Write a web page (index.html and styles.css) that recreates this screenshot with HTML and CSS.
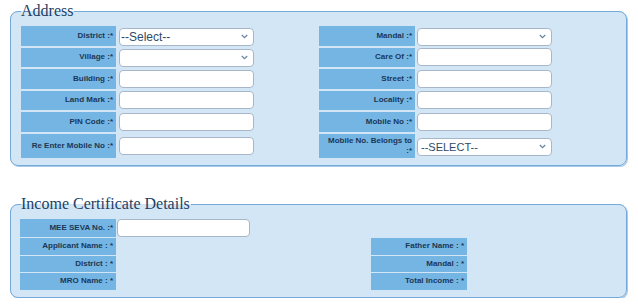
FILE: index.html
```html
<!DOCTYPE html>
<html>
<head>
<meta charset="utf-8">
<link rel="stylesheet" href="styles.css">
</head>
<body>
<fieldset class="box box-address">
  <legend class="legend">Address</legend>
  <div class="grid-address">
    <div class="lbl">District :*</div>
    <div class="cell"><div class="sel"><select class="ctl ctl-select"><option>--Select--</option></select><svg class="chev" width="7" height="5" viewBox="0 0 7 5"><path d="M0.8 1 L3.5 3.6 L6.2 1" fill="none" stroke="#6b87a3" stroke-width="1.3"/></svg></div></div>
    <div class="lbl">Mandal :*</div>
    <div class="cell cell-r"><div class="sel"><select class="ctl ctl-select"><option></option></select><svg class="chev" width="7" height="5" viewBox="0 0 7 5"><path d="M0.8 1 L3.5 3.6 L6.2 1" fill="none" stroke="#6b87a3" stroke-width="1.3"/></svg></div></div>

    <div class="lbl">Village :*</div>
    <div class="cell"><div class="sel"><select class="ctl ctl-select"><option></option></select><svg class="chev" width="7" height="5" viewBox="0 0 7 5"><path d="M0.8 1 L3.5 3.6 L6.2 1" fill="none" stroke="#6b87a3" stroke-width="1.3"/></svg></div></div>
    <div class="lbl">Care Of :*</div>
    <div class="cell cell-r"><input class="ctl" type="text"></div>

    <div class="lbl">Building :*</div>
    <div class="cell"><input class="ctl" type="text"></div>
    <div class="lbl">Street :*</div>
    <div class="cell cell-r"><input class="ctl" type="text"></div>

    <div class="lbl">Land Mark :*</div>
    <div class="cell"><input class="ctl" type="text"></div>
    <div class="lbl">Locality :*</div>
    <div class="cell cell-r"><input class="ctl" type="text"></div>

    <div class="lbl">PIN Code :*</div>
    <div class="cell"><input class="ctl" type="text"></div>
    <div class="lbl">Mobile No :*</div>
    <div class="cell cell-r"><input class="ctl" type="text"></div>

    <div class="lbl lbl-tall">Re Enter Mobile No :*</div>
    <div class="cell"><input class="ctl" type="text"></div>
    <div class="lbl lbl-tall">Mobile No. Belongs to :*</div>
    <div class="cell cell-r"><div class="sel"><select class="ctl ctl-select ctl-upper"><option>--SELECT--</option></select><svg class="chev" width="7" height="5" viewBox="0 0 7 5"><path d="M0.8 1 L3.5 3.6 L6.2 1" fill="none" stroke="#6b87a3" stroke-width="1.3"/></svg></div></div>
  </div>
</fieldset>

<fieldset class="box box-income">
  <legend class="legend">Income Certificate Details</legend>
  <div class="grid-income">
    <div class="lbl">MEE SEVA No. :*</div>
    <div class="cell-i"><input class="ctl ctl-mee" type="text"></div>
    <div></div>
    <div></div>

    <div class="lbl">Applicant Name : *</div>
    <div></div>
    <div class="lbl">Father Name : *</div>
    <div></div>

    <div class="lbl">District : *</div>
    <div></div>
    <div class="lbl">Mandal : *</div>
    <div></div>

    <div class="lbl">MRO Name : *</div>
    <div></div>
    <div class="lbl">Total Income : *</div>
    <div></div>
  </div>
</fieldset>
</body>
</html>
```
FILE: styles.css
```css
html, body {
  margin: 0;
  padding: 0;
  background: #ffffff;
}
body {
  padding-top: 2px;
  font-family: "Liberation Sans", Arial, sans-serif;
}
.box {
  margin: 0 11px 0 10px;
  padding: 6px 10px 7px 10px;
  border: 1px solid #74a9d9;
  border-radius: 8px;
  background: #d3e6f5;
  box-shadow: 1px 1px 0 #a8c9e8;
  min-width: 0;
}
.box-income {
  margin-top: 29px;
}
.legend {
  padding: 0 1px 0 0;
  margin-left: 0;
  font-family: "Liberation Serif", "Times New Roman", serif;
  font-size: 16px;
  line-height: 18px;
  color: #1e3f66;
}
.grid-address {
  display: grid;
  grid-template-columns: 95px 203px 96px 1fr;
  grid-template-rows: 19.5px 19.5px 19.5px 19.5px 19.5px 24.5px;
  row-gap: 2px;
}
.lbl {
  background: #75b5e3;
  color: #1b3756;
  font-size: 8px;
  font-weight: bold;
  text-align: right;
  padding: 0 3px 0 4px;
  display: flex;
  align-items: center;
  justify-content: flex-end;
  line-height: 10px;
}
.lbl-tall {
  padding-top: 1px;
  padding-bottom: 1px;
}
.cell {
  display: flex;
  align-items: center;
  padding-left: 3px;
}
.cell-r {
  padding-left: 2px;
}
.ctl {
  box-sizing: border-box;
  width: 135px;
  height: 18px;
  margin: 0;
  border: 1px solid #a7b7c7;
  border-radius: 4px;
  background: #ffffff;
  font-family: "Liberation Sans", Arial, sans-serif;
  font-size: 12px;
  color: #2f4a66;
  padding: 0 2px;
  outline: none;
}
.sel {
  position: relative;
  width: 135px;
  height: 18px;
}
.ctl-select {
  -webkit-appearance: none;
  appearance: none;
  padding: 0 14px 0 1px;
  line-height: 16px;
}
.ctl-upper {
  font-size: 11px;
  padding-left: 3px;
}
.chev {
  position: absolute;
  right: 6px;
  top: 7px;
}
.grid-income {
  display: grid;
  grid-template-columns: 96px 255px 96px 1fr;
  grid-template-rows: 18px 16.5px 16.5px 16.5px;
  row-gap: 1px;
  margin-left: -1px;
}
.cell-i {
  display: flex;
  align-items: center;
  padding-left: 1px;
}
.ctl-mee {
  width: 133px;
}
```
